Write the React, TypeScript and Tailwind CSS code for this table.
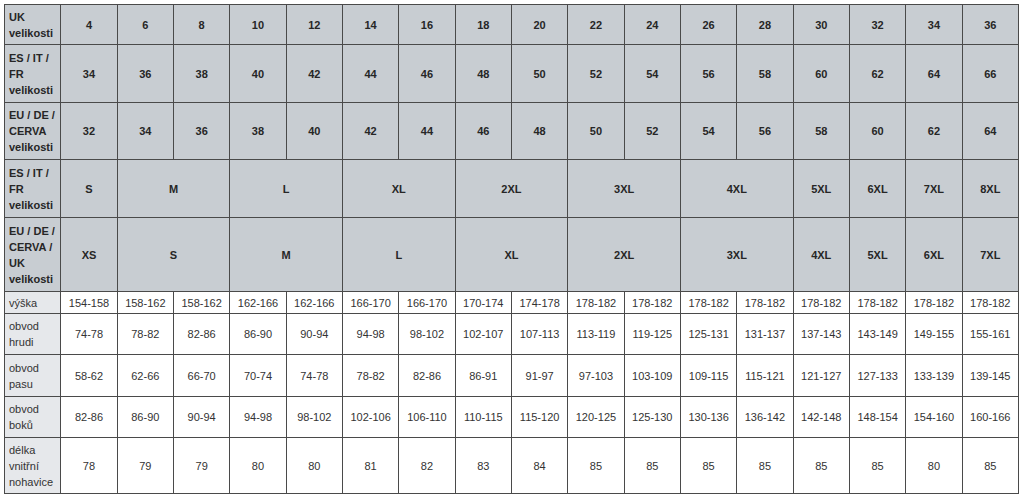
import React from "react";

type Cell = { t: string; span?: number };

const headRows: { label: string[]; h: string; cells: Cell[] }[] = [
  {
    label: ["UK", "velikosti"],
    h: "h-[40px]",
    cells: ["4", "6", "8", "10", "12", "14", "16", "18", "20", "22", "24", "26", "28", "30", "32", "34", "36"].map((t) => ({ t })),
  },
  {
    label: ["ES / IT /", "FR", "velikosti"],
    h: "h-[58px]",
    cells: ["34", "36", "38", "40", "42", "44", "46", "48", "50", "52", "54", "56", "58", "60", "62", "64", "66"].map((t) => ({ t })),
  },
  {
    label: ["EU / DE /", "CERVA", "velikosti"],
    h: "h-[57px]",
    cells: ["32", "34", "36", "38", "40", "42", "44", "46", "48", "50", "52", "54", "56", "58", "60", "62", "64"].map((t) => ({ t })),
  },
  {
    label: ["ES / IT /", "FR", "velikosti"],
    h: "h-[58px]",
    cells: [
      { t: "S" },
      { t: "M", span: 2 },
      { t: "L", span: 2 },
      { t: "XL", span: 2 },
      { t: "2XL", span: 2 },
      { t: "3XL", span: 2 },
      { t: "4XL", span: 2 },
      { t: "5XL" },
      { t: "6XL" },
      { t: "7XL" },
      { t: "8XL" },
    ],
  },
  {
    label: ["EU / DE /", "CERVA /", "UK", "velikosti"],
    h: "h-[74px]",
    cells: [
      { t: "XS" },
      { t: "S", span: 2 },
      { t: "M", span: 2 },
      { t: "L", span: 2 },
      { t: "XL", span: 2 },
      { t: "2XL", span: 2 },
      { t: "3XL", span: 2 },
      { t: "4XL" },
      { t: "5XL" },
      { t: "6XL" },
      { t: "7XL" },
    ],
  },
];

const bodyRows: { label: string[]; h: string; cells: string[] }[] = [
  {
    label: ["výška"],
    h: "h-[22px]",
    cells: ["154-158", "158-162", "158-162", "162-166", "162-166", "166-170", "166-170", "170-174", "174-178", "178-182", "178-182", "178-182", "178-182", "178-182", "178-182", "178-182", "178-182"],
  },
  {
    label: ["obvod", "hrudi"],
    h: "h-[41px]",
    cells: ["74-78", "78-82", "82-86", "86-90", "90-94", "94-98", "98-102", "102-107", "107-113", "113-119", "119-125", "125-131", "131-137", "137-143", "143-149", "149-155", "155-161"],
  },
  {
    label: ["obvod", "pasu"],
    h: "h-[42px]",
    cells: ["58-62", "62-66", "66-70", "70-74", "74-78", "78-82", "82-86", "86-91", "91-97", "97-103", "103-109", "109-115", "115-121", "121-127", "127-133", "133-139", "139-145"],
  },
  {
    label: ["obvod", "boků"],
    h: "h-[41px]",
    cells: ["82-86", "86-90", "90-94", "94-98", "98-102", "102-106", "106-110", "110-115", "115-120", "120-125", "125-130", "130-136", "136-142", "142-148", "148-154", "154-160", "160-166"],
  },
  {
    label: ["délka", "vnitřní", "nohavice"],
    h: "h-[56px]",
    cells: ["78", "79", "79", "80", "80", "81", "82", "83", "84", "85", "85", "85", "85", "85", "85", "80", "85"],
  },
];

export default function App() {
  return (
    <div
      className="w-[1024px] h-[501px] bg-white pl-[4px] pt-[4px]"
      style={{ fontFamily: '"Liberation Sans", Arial, sans-serif' }}
    >
      <table className="table-fixed border-collapse w-[1015px] text-[11px] leading-[16px]">
        <colgroup>
          {Array.from({ length: 18 }).map((_, i) => (
            <col key={i} />
          ))}
        </colgroup>
        <tbody>
          {headRows.map((r, ri) => (
            <tr key={"h" + ri} className={r.h}>
              <td className="border border-[#4a4a4a] bg-[#c8cdd2] px-[4px] py-0 align-middle font-bold text-[#262626] text-left">
                {r.label.map((l, i) => (
                  <div key={i}>{l}</div>
                ))}
              </td>
              {r.cells.map((c, ci) => (
                <td
                  key={ci}
                  colSpan={c.span}
                  className="border border-[#4a4a4a] bg-[#c8cdd2] px-[2px] py-0 align-middle text-center font-bold text-[#262626]"
                >
                  {c.t}
                </td>
              ))}
            </tr>
          ))}
          {bodyRows.map((r, ri) => (
            <tr key={"b" + ri} className={r.h}>
              <td className="border border-[#4a4a4a] bg-[#e6e8eb] px-[4px] py-0 align-middle text-left text-[#333333]">
                {r.label.map((l, i) => (
                  <div key={i}>{l}</div>
                ))}
              </td>
              {r.cells.map((c, ci) => (
                <td
                  key={ci}
                  className="border border-[#4a4a4a] bg-white px-0 py-0 align-middle text-center text-[#333333] whitespace-nowrap"
                >
                  {c}
                </td>
              ))}
            </tr>
          ))}
        </tbody>
      </table>
    </div>
  );
}
